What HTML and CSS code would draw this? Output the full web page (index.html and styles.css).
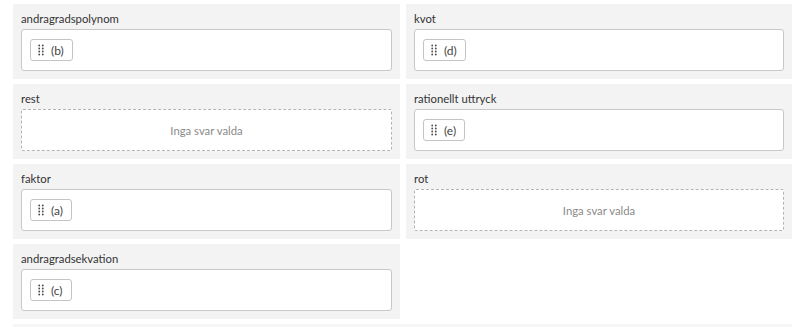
FILE: index.html
```html
<!DOCTYPE html>
<html lang="sv">
<head>
    <meta charset="UTF-8">
    <meta name="viewport" content="width=device-width, initial-scale=1.0">
    <title>Matchning</title>
    <link rel="stylesheet" href="styles.css">
</head>
<body>
    <div class="board">
        <div class="bucket">
            <div class="bucket-title">andragradspolynom</div>
            <div class="dropzone">
                <span class="chip"><svg class="grip" width="6" height="12" viewBox="0 0 6 12"><g fill="#4a4a4a"><circle cx="1.2" cy="1.5" r="0.9"/><circle cx="4.8" cy="1.5" r="0.9"/><circle cx="1.2" cy="4.5" r="0.9"/><circle cx="4.8" cy="4.5" r="0.9"/><circle cx="1.2" cy="7.5" r="0.9"/><circle cx="4.8" cy="7.5" r="0.9"/><circle cx="1.2" cy="10.5" r="0.9"/><circle cx="4.8" cy="10.5" r="0.9"/></g></svg>(b)</span>
            </div>
        </div>
        <div class="bucket">
            <div class="bucket-title">kvot</div>
            <div class="dropzone">
                <span class="chip"><svg class="grip" width="6" height="12" viewBox="0 0 6 12"><g fill="#4a4a4a"><circle cx="1.2" cy="1.5" r="0.9"/><circle cx="4.8" cy="1.5" r="0.9"/><circle cx="1.2" cy="4.5" r="0.9"/><circle cx="4.8" cy="4.5" r="0.9"/><circle cx="1.2" cy="7.5" r="0.9"/><circle cx="4.8" cy="7.5" r="0.9"/><circle cx="1.2" cy="10.5" r="0.9"/><circle cx="4.8" cy="10.5" r="0.9"/></g></svg>(d)</span>
            </div>
        </div>
        <div class="bucket">
            <div class="bucket-title">rest</div>
            <div class="dropzone empty">Inga svar valda</div>
        </div>
        <div class="bucket">
            <div class="bucket-title">rationellt uttryck</div>
            <div class="dropzone">
                <span class="chip"><svg class="grip" width="6" height="12" viewBox="0 0 6 12"><g fill="#4a4a4a"><circle cx="1.2" cy="1.5" r="0.9"/><circle cx="4.8" cy="1.5" r="0.9"/><circle cx="1.2" cy="4.5" r="0.9"/><circle cx="4.8" cy="4.5" r="0.9"/><circle cx="1.2" cy="7.5" r="0.9"/><circle cx="4.8" cy="7.5" r="0.9"/><circle cx="1.2" cy="10.5" r="0.9"/><circle cx="4.8" cy="10.5" r="0.9"/></g></svg>(e)</span>
            </div>
        </div>
        <div class="bucket">
            <div class="bucket-title">faktor</div>
            <div class="dropzone">
                <span class="chip"><svg class="grip" width="6" height="12" viewBox="0 0 6 12"><g fill="#4a4a4a"><circle cx="1.2" cy="1.5" r="0.9"/><circle cx="4.8" cy="1.5" r="0.9"/><circle cx="1.2" cy="4.5" r="0.9"/><circle cx="4.8" cy="4.5" r="0.9"/><circle cx="1.2" cy="7.5" r="0.9"/><circle cx="4.8" cy="7.5" r="0.9"/><circle cx="1.2" cy="10.5" r="0.9"/><circle cx="4.8" cy="10.5" r="0.9"/></g></svg>(a)</span>
            </div>
        </div>
        <div class="bucket">
            <div class="bucket-title">rot</div>
            <div class="dropzone empty">Inga svar valda</div>
        </div>
        <div class="bucket">
            <div class="bucket-title">andragradsekvation</div>
            <div class="dropzone">
                <span class="chip"><svg class="grip" width="6" height="12" viewBox="0 0 6 12"><g fill="#4a4a4a"><circle cx="1.2" cy="1.5" r="0.9"/><circle cx="4.8" cy="1.5" r="0.9"/><circle cx="1.2" cy="4.5" r="0.9"/><circle cx="4.8" cy="4.5" r="0.9"/><circle cx="1.2" cy="7.5" r="0.9"/><circle cx="4.8" cy="7.5" r="0.9"/><circle cx="1.2" cy="10.5" r="0.9"/><circle cx="4.8" cy="10.5" r="0.9"/></g></svg>(c)</span>
            </div>
        </div>
        <div class="bucket-spacer"></div>
        <div class="pool"></div>
    </div>
</body>
</html>
```

FILE: styles.css
```css
body {
    margin: 0;
    font-family: Lato, "Open Sans", sans-serif;
    background: #ffffff;
    color: #333333;
}

.board {
    display: grid;
    grid-template-columns: 387px 386px;
    grid-auto-rows: 75px;
    column-gap: 6px;
    row-gap: 5px;
    padding: 4px 8px 0 13px;
}

.bucket {
    background: #f3f3f3;
    padding: 0 8px 8px 8px;
    display: flex;
    flex-direction: column;
}

.bucket-title {
    height: 25px;
    box-sizing: border-box;
    padding-top: 7px;
    line-height: 15px;
    font-size: 11.3px;
    color: #333333;
}

.dropzone {
    flex: 1;
    background: #ffffff;
    border: 1px solid #c8c8c8;
    border-radius: 3px;
    padding: 9px 8px;
    box-sizing: border-box;
    display: flex;
    align-items: flex-start;
}

.dropzone.empty {
    border: 1px dashed #b4b4b4;
    border-radius: 2px;
    justify-content: center;
    align-items: center;
    color: #8a8a8a;
    font-size: 11.3px;
}

.chip {
    display: inline-flex;
    align-items: center;
    height: 22px;
    box-sizing: border-box;
    padding: 0 8px 0 7px;
    border: 1px solid #c4c4c4;
    border-radius: 3px;
    background: #ffffff;
    font-size: 12px;
    color: #444444;
}

.grip {
    margin-right: 7px;
}

.pool {
    grid-column: 1 / 3;
    background: #f6f6f6;
}
```
